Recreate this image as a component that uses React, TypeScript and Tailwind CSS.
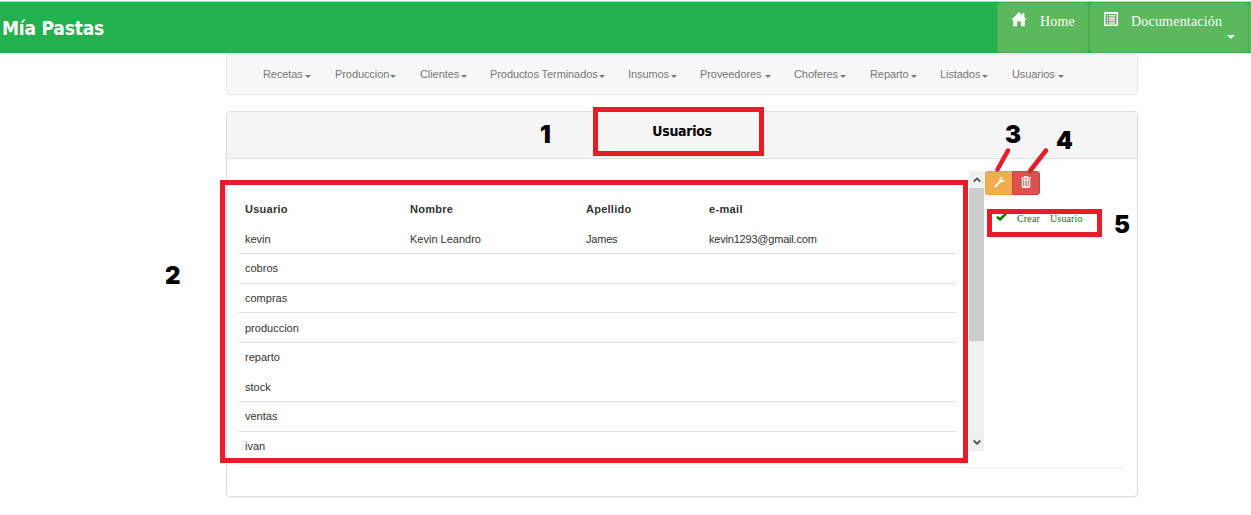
import React from 'react';

const menu = [
  { label: 'Recetas', width: 'w-[72px]', gap: 'gap-[2px]' },
  { label: 'Produccion', width: 'w-[85px]', gap: 'gap-[1px]' },
  { label: 'Clientes', width: 'w-[70px]', gap: 'gap-[2px]' },
  { label: 'Productos Terminados', width: 'w-[138px]', gap: 'gap-[1px]' },
  { label: 'Insumos', width: 'w-[72px]', gap: 'gap-[2px]' },
  { label: 'Proveedores', width: 'w-[94px]', gap: 'gap-[3px]' },
  { label: 'Choferes', width: 'w-[76px]', gap: 'gap-[2px]' },
  { label: 'Reparto', width: 'w-[70px]', gap: 'gap-[2px]' },
  { label: 'Listados', width: 'w-[72px]', gap: 'gap-[2px]' },
  { label: 'Usuarios', width: 'w-[72px]', gap: 'gap-[3px]' },
];

const rows = [
  { user: 'kevin', name: 'Kevin Leandro', last: 'James', mail: 'kevin1293@gmail.com', box: 'h-[30px] border-b pt-px' },
  { user: 'cobros', box: 'h-[30px] border-b' },
  { user: 'compras', box: 'h-[29px] border-b' },
  { user: 'produccion', box: 'h-[30px] border-b pt-px' },
  { user: 'reparto', box: 'h-[30px] pb-px' },
  { user: 'stock', box: 'h-[29px] border-b' },
  { user: 'ventas', box: 'h-[30px] border-b' },
  { user: 'ivan', box: 'h-[29px]' },
];

function Caret({ className }: { className: string }) {
  return (
    <svg viewBox="0 0 6 3" className={className} fill="currentColor">
      <path d="M0 0h6L3 3z" />
    </svg>
  );
}

function HomeIcon() {
  return (
    <svg width="16" height="15" viewBox="0 0 16 15" fill="currentColor">
      <path d="M8 0 0 8h2.200v6.200h3.900V9.500h3.800v4.700h3.900V8H16l-2.600-2.600V1h-2v2.400z" />
    </svg>
  );
}

function ListIcon() {
  return (
    <svg width="14" height="14" viewBox="0 0 14 14" fill="currentColor">
      <path fillRule="evenodd" d="M.7 0h12.600l.7.7v12.600l-.7.7H.7l-.7-.7V.7zM1.500 2v10.500h11V2z" />
      <path d="M3 3h1v1.300H3zm2 0h6v1.300H5zM3 5.400h1v1.300H3zm2 0h6v1.300H5zM3 7.800h1v1.300H3zm2 0h6v1.300H5zM3 10.200h1v1.300H3zm2 0h6v1.300H5z" />
    </svg>
  );
}

function WrenchIcon() {
  return (
    <svg width="11" height="11" viewBox="0 0 11 11" fill="currentColor">
      <path d="M10.700 2.400 9 3.600 7.600 3.300 7.300 2.100 8.800.5C7.500 0 6.200.4 5.600 1.500c-.4.700-.5 1.500-.2 2.200L.7 8.700c-.4.400-.4 1 0 1.400s1 .4 1.400 0l4.500-4.900c1 .3 2.200.1 3.100-.7.800-.6 1.100-1.300 1-2.100z" />
    </svg>
  );
}

function TrashIcon() {
  return (
    <svg width="10" height="12" viewBox="0 0 10 12" fill="currentColor">
      <path fillRule="evenodd" d="M3 0h4v1.200h3v1.300H0V1.200h3zM4 .7v.5h2V.7zM.8 3.200h8.400V11l-1 1H1.800l-1-1zM2.200 4.300v6.200h.8V4.300zm1.600 0v6.200h.8V4.300zm1.600 0v6.200h.8V4.300zm1.600 0v6.200h.8V4.300z" />
    </svg>
  );
}

function Marker({ value, className }: { value: string; className: string }) {
  return (
    <span className={`absolute font-['Inter',sans-serif] text-[24px] leading-[24px] font-black text-black ${className}`}>
      {value}
    </span>
  );
}

export default function App() {
  return (
    <div className="relative h-[515px] w-[1251px] overflow-hidden bg-white font-['Liberation_Sans',sans-serif] text-[11px] text-[#333]">
      <header className="mt-px flex h-[52px] justify-between border-t border-[#c8c8c8] bg-[#22b14c] text-white">
        <div className="pt-[14px] pl-[2px] font-['DejaVu_Sans_Condensed','DejaVu_Sans',sans-serif] text-[19px] leading-6 font-bold tracking-[-0.2px] [font-stretch:condensed]">
          Mía Pastas
        </div>
        <div className="flex font-['Liberation_Serif',serif] text-[14px] leading-5">
          <a className="flex w-[92px] rounded-[4px] border border-[#4cae4c] bg-[#5cb85c] pt-[9px] pl-[13px]">
            <HomeIcon />
            <span className="ml-[13px] tracking-[0.2px]">Home</span>
          </a>
          <a className="flex w-[160px] flex-col rounded-[4px] border border-[#4cae4c] bg-[#5cb85c] pt-[9px] pl-[14px]">
            <span className="flex">
              <ListIcon />
              <span className="ml-[13px] tracking-[0.2px]">Documentación</span>
            </span>
            <Caret className="mt-[3px] mr-[13px] h-1 w-2 self-end" />
          </a>
          <span className="w-[2px] rounded-l-[2px] bg-[#5cb85c]" />
        </div>
      </header>

      <nav className="mt-px ml-[226px] flex h-[41px] w-[912px] rounded-[4px] border border-[#e7e7e7] bg-[#f8f8f8] pl-[36px] tracking-[-0.08px] text-[#777]">
        {menu.map((item) => (
          <a key={item.label} className={`flex h-[39px] shrink-0 items-center whitespace-nowrap ${item.width} ${item.gap}`}>
            {item.label}
            <Caret className="mt-[3px] h-[3px] w-[6px]" />
          </a>
        ))}
      </nav>

      <section className="mt-4 ml-[226px] h-[386px] w-[912px] rounded-[4px] border border-[#ddd] bg-white shadow-[0_1px_1px_rgba(0,0,0,0.05)]">
        <h1 className="h-[47px] rounded-t-[3px] border-b border-[#ddd] bg-[#f5f5f5] pt-[9px] text-center font-['DejaVu_Sans_Condensed','DejaVu_Sans',sans-serif] text-[14px] leading-5 font-bold tracking-[-0.3px] text-black [font-stretch:condensed]">
          Usuarios
        </h1>
        <div className="mx-3 mt-3 flex h-[297px] border-b border-[#eee]">
          <div className="h-[280px] w-[717px] overflow-hidden pt-[23px]">
            <div className="grid h-[30px] grid-cols-[165px_176px_123px_1fr] items-center pl-[6px] font-bold tracking-[0.25px]">
              <span>Usuario</span>
              <span>Nombre</span>
              <span>Apellido</span>
              <span className="tracking-[0.35px]">e-mail</span>
            </div>
            {rows.map((row) => (
              <div key={row.user} className={`grid grid-cols-[165px_176px_123px_1fr] items-center border-[#ddd] pl-[6px] ${row.box}`}>
                <span>{row.user}</span>
                <span>{row.name}</span>
                <span className="tracking-[-0.2px]">{row.last}</span>
                <span className="tracking-[-0.2px]">{row.mail}</span>
              </div>
            ))}
          </div>
          <div className="ml-[13px] flex h-[280px] w-[15px] flex-col bg-[#f0f0f0]">
            <span className="flex h-[17px] items-center justify-center">
              <svg width="8" height="7" viewBox="0 0 8 7" fill="none" stroke="#505050" strokeWidth="1.800">
                <path d="m.7 5.700 3.300-3.300 3.300 3.300" />
              </svg>
            </span>
            <span className="h-[153px] bg-[#cdcdcd]" />
            <span className="mt-auto flex h-[17px] items-center justify-center">
              <svg width="8" height="7" viewBox="0 0 8 7" fill="none" stroke="#505050" strokeWidth="1.800">
                <path d="m.7 1.500 3.300 3.300 3.300-3.300" />
              </svg>
            </span>
          </div>
          <div className="ml-px">
            <div className="flex h-6 text-white">
              <button className="flex w-[27px] items-center justify-center rounded-l-[3px] border border-r-0 border-[#eea236] bg-[#f0ad4e] pb-[2px] pl-px">
                <WrenchIcon />
              </button>
              <button className="flex w-7 items-center justify-center rounded-r-[3px] border border-[#d43f3a] bg-[#d9534f] pb-[2px]">
                <TrashIcon />
              </button>
            </div>
            <a className="mt-[18px] ml-[11px] flex h-3 font-['Liberation_Serif',serif] text-[10px] leading-3 tracking-[0.15px] text-[#008000]">
              <svg width="11" height="9" viewBox="0 0 11 9" fill="currentColor">
                <path d="M9.200 0 11 1.600 4.200 8 0 4.700 1.700 3 4 4.600z" />
              </svg>
              <span className="ml-[10px]">Crear</span>
              <span className="ml-[10px]">Usuario</span>
            </a>
          </div>
        </div>
      </section>

      <div className="absolute top-[107px] left-[593px] h-[49px] w-[171px] border-[5px] border-[#e81c26]" />
      <div className="absolute top-[180px] left-[220px] h-[283px] w-[748px] border-[5px] border-[#e81c26]" />
      <div className="absolute top-[209px] left-[987px] h-[28px] w-[115px] border-[5px] border-[#e81c26]" />
      <svg className="absolute top-[140px] left-[985px]" width="75" height="40" viewBox="0 0 75 40" stroke="#e81c26" strokeWidth="4.500" strokeLinecap="round">
        <path d="M12.500 29.500 23 10.500M45 31 61 10.500" />
      </svg>
      <Marker value="1" className="top-[123px] left-[540px]" />
      <Marker value="2" className="top-[264px] left-[165px]" />
      <Marker value="3" className="top-[123px] left-[1005px]" />
      <Marker value="4" className="top-[129px] left-[1056px]" />
      <Marker value="5" className="top-[213px] left-[1114px]" />
    </div>
  );
}
